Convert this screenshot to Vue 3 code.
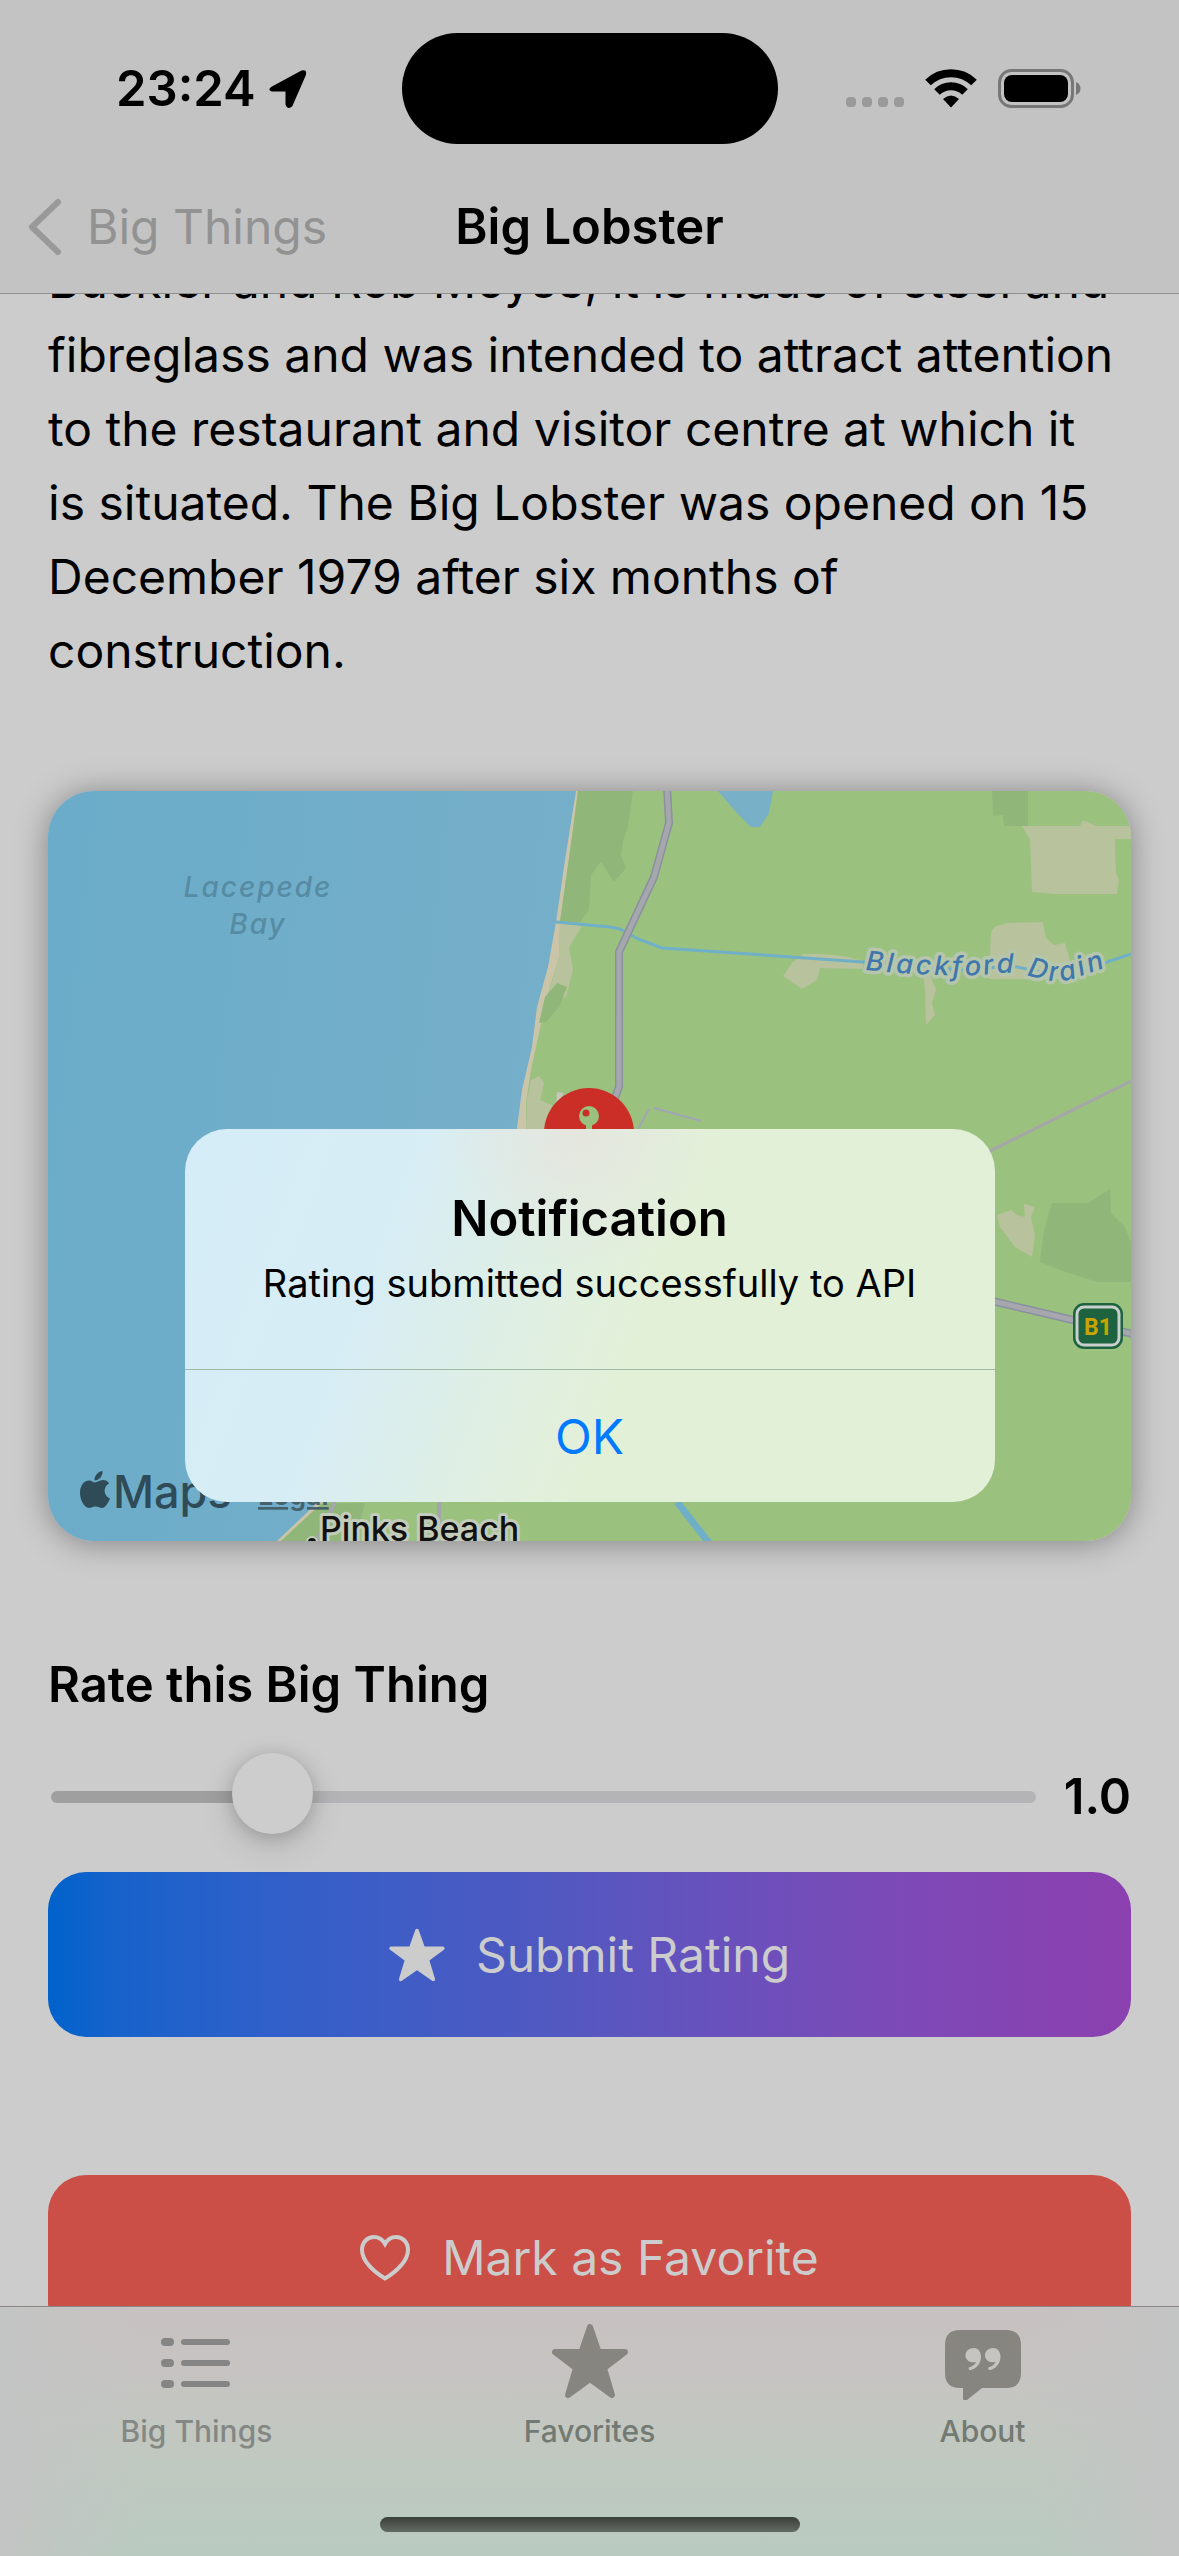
<script setup>
import { ref, computed } from 'vue'

const rating = ref(1)
const maxRating = 5
const fill = computed(() => `${(rating.value / maxRating) * 92 + 4}%`)
const alertOpen = ref(true)
</script>

<template>
  <div class="screen">
    <header class="top">
      <div class="status">
        <div class="status-side">
          <span class="time">23:24</span>
          <svg class="arrow" viewBox="0 0 40 40" aria-hidden="true">
            <path d="M3.5 19 L34 2.5 Q38 1 37 5.500 L23.500 36.500 Q20 40 18.500 35.500 L18.500 21.500 L4 21.500 Q1 21 3.500 19 Z" fill="#000" stroke="#000" stroke-width="2" stroke-linejoin="round" />
          </svg>
        </div>
        <div class="island"></div>
        <div class="status-side right">
          <svg class="dots" viewBox="0 0 58 40" aria-hidden="true">
            <rect v-for="n in 4" :key="n" :x="(n - 1) * 16" y="28" width="10" height="10" rx="4" fill="#9a9a9a" />
          </svg>
          <svg class="wifi" viewBox="0 0 52 40" aria-hidden="true">
            <g fill="none" stroke="#000" stroke-width="8">
              <path d="M3 13.500 A33 33 0 0 1 49 13.500" />
              <path d="M12 23 A20 20 0 0 1 40 23" />
            </g>
            <path d="M26 38.500 L18 30 Q26 23 34 30 Z" fill="#000" />
          </svg>
          <svg class="battery" viewBox="0 0 84 40" aria-hidden="true">
            <rect x="1.500" y="1.500" width="73" height="36" rx="12" fill="none" stroke="#777" stroke-width="3" />
            <rect x="6" y="6" width="64" height="27" rx="8" fill="#000" />
            <path d="M78 13 Q82.500 15 82.500 19.500 Q82.500 24 78 26 Z" fill="#777" />
          </svg>
        </div>
      </div>
      <nav class="navbar">
        <a class="back" href="#big-things">
          <svg viewBox="0 0 34 58" aria-hidden="true">
            <path d="M30 4 L4 29 L30 54" fill="none" stroke="#999" stroke-width="6" stroke-linecap="round" stroke-linejoin="round" />
          </svg>
          <span>Big Things</span>
        </a>
        <h1>Big Lobster</h1>
      </nav>
    </header>

    <main class="content">
      <p class="description">
        Buckler and Rob Moyse, it is made of steel and<br />
        fibreglass and was intended to attract attention<br />
        to the restaurant and visitor centre at which it<br />
        is situated. The Big Lobster was opened on 15<br />
        December 1979 after six months of<br />
        construction.
      </p>

      <div class="map">
        <svg viewBox="0 0 1083 750" preserveAspectRatio="xMidYMid slice" role="img" aria-label="Map of Lacepede Bay">
          <defs>
            <linearGradient id="sea" x1="0" y1="0" x2="1" y2="0.15">
              <stop offset="0" stop-color="#6aacc9" />
              <stop offset="1" stop-color="#77afc9" />
            </linearGradient>
            <path id="drain" d="M817 179 Q890 186 935 184 Q965 179 985 186 Q1010 194 1030 186 L1075 171" />
          </defs>
          <rect width="560" height="750" fill="url(#sea)" />
          <path fill="#cac5a8" d="M528 0 L517 69 L508 131 L500 176 L489 216 L484 256 L474 299 L469 337 L430 520 L269 712 L229 750 L1083 750 V0 Z" />
          <path fill="#9bc17f" d="M530 0 L524 46 L512 131 L511 166 L498 209 L491 242 L483 279 L478 312 L478 337 L440 520 L273 713 L233 750 H1083 V0 Z" />
          <g fill="#91b679">
            <path d="M530 0 H585 L580 36 L575 50 L573 65 L578 77 L566 91 L553 71 L543 84 L541 119 L532 131 H512 L524 46 Z" />
            <path d="M944 0 H980 V35 H956 L955 24 L945 25 Z" />
            <path d="M1004 412 H1040 L1062 398 L1063 422 L1076 435 L1083 451 V491 H1050 L1020 482 L992 471 L996 439 Z" />
            <path d="M273 713 L317 712 L307 750 H233 Z" />
          </g>
          <g fill="#b8c29d">
            <path d="M512 131 L534 135 L521 156 L525 179 L518 206 L498 212 L511 166 Z" />
            <path d="M491 285 L496 292 L492 309 L504 314 L498 338 H478 L479 309 L483 289 Z" />
            <path d="M974 35 H1032 L1035 29 L1048 35 H1083 V48 H1067 L1068 82 L1071 89 L1069 103 H1006 L984 101 L982 48 Z" />
            <path d="M755 163 H772 L796 165 L815 170 V178 L772 177 L769 189 L754 198 L735 185 L744 172 Z" />
            <path d="M943 141 L948 135 L960 132 L995 131 L998 147 L1006 154 L1017 152 L1022 169 L1013 188 H941 Z" />
            <path d="M875 182 L883 186 L888 199 L884 212 L887 224 L878 234 L877 199 Z" />
            <path d="M949 424 L963 419 L969 424 L977 426 L976 413 L987 416 L983 426 L987 444 L984 466 L967 456 L952 436 Z" />
          </g>
          <path fill="#91b679" d="M509 192 L519 196 L511 216 L498 231 L491 232 L497 206 Z" />
          <path fill="#c6c8bd" d="M509 301 L516 302 L508 314 Z" />
          <path fill="#77b0c7" d="M670 0 H725 L721 22 L712 36 H703 L688 21 Z" />
          <g fill="none" stroke="#6fb0c8" stroke-width="3">
            <path d="M508 131 L562 136 L572 138 L590 148 L614 157 L815 171 L914 179 L964 175 L1002 183 L1030 181 L1083 163" />
            <path d="M629 711 L661 752" stroke-width="7" />
          </g>
          <g fill="none" stroke-linejoin="round">
            <path d="M619 -4 L621 32 L606 86 L571 161 L571 296 L560 325" stroke="#8a90a0" stroke-width="8" />
            <path d="M619 -4 L621 32 L606 86 L571 161 L571 296 L560 325" stroke="#a5a7ad" stroke-width="5" />
            <path d="M940 509 L1025 529 L1085 543" stroke="#8a90a0" stroke-width="8" />
            <path d="M940 509 L1025 529 L1085 543" stroke="#a5a7ad" stroke-width="5" />
            <path d="M1083 290 L940 361" stroke="#a4a6a8" stroke-width="3" />
            <path d="M606 317 L653 330 M601 318 L589 340" stroke="#a0a6b4" stroke-width="2" />
            <path d="M287 711 L269 750 M391 711 V740" stroke="#a4a6ad" stroke-width="4" />
          </g>
          <circle cx="541" cy="342" r="45" fill="#cb2e27" />
          <circle cx="541" cy="325" r="10" fill="#9bc17f" />
          <rect x="538" y="333" width="6" height="22" fill="#9bc17f" />
          <circle cx="538" cy="322" r="3.500" fill="#cb2e27" />

          <g class="sea-label" text-anchor="middle">
            <text x="210" y="106">Lacepede</text>
            <text x="210" y="143">Bay</text>
          </g>
          <text class="drain-label"><textPath href="#drain">Blackford Drain</textPath></text>

          <rect x="1025" y="512" width="50" height="46" rx="11" fill="#1e633f" />
          <rect x="1029" y="516" width="42" height="38" rx="7" fill="none" stroke="#c8cfcc" stroke-width="3" />
          <text class="shield" x="1050" y="544" text-anchor="middle">B1</text>

          <path fill="#2f4b57" d="M54.500 680 C55 685 51 689.500 46.500 689.500 C46 685 50 680.500 54.500 680 Z M47 691.500 C49 691.500 51.500 689 55 689 C58 689 60 690.500 61 692.500 C54.500 696 55.500 705 62 707.500 C60 712.500 57 717 54 717 C51.500 717 50.500 715.500 47.500 715.500 C44.500 715.500 43.500 717 41 717 C36 717 32 708 32 702 C32 694 36.500 689.500 41 689.500 C43.500 689.500 45.500 691.500 47 691.500 Z" />
          <text class="maps" x="65" y="717">Maps</text>
          <text class="legal" x="210" y="714">Legal</text>
          <circle cx="264" cy="751" r="5" fill="#111" stroke="#c3ccba" stroke-width="2" />
          <text class="town" x="272" y="750">Pinks Beach</text>
        </svg>
      </div>

      <section class="rate">
        <h2><label for="rating">Rate this Big Thing</label></h2>
        <div class="slider-row">
          <input id="rating" v-model.number="rating" type="range" min="0" :max="maxRating" step="0.1" :style="{ '--fill': fill }" />
          <output for="rating">{{ rating.toFixed(1) }}</output>
        </div>
        <button class="action submit" type="button">
          <svg class="star" viewBox="0 0 76 72" aria-hidden="true">
            <path d="M38 3 L46.500 27 H73 L52 42.500 L60 69 L38 53.500 L16 69 L24 42.500 L3 27 H29.500 Z" fill="#ccc" stroke="#ccc" stroke-width="5" stroke-linejoin="round" />
          </svg>
          Submit Rating
        </button>
      </section>

      <button class="action favorite" type="button">
        <svg class="heart" viewBox="0 0 50 46" aria-hidden="true">
          <path d="M25 43.500 C14 37 2 26 2 15 C2 7 7.500 2 14 2 C19 2 22.500 4.500 25 9 C27.500 4.500 31 2 36 2 C42.500 2 48 7 48 15 C48 26 36 37 25 43.500 Z" fill="none" stroke="#ccc" stroke-width="4" />
        </svg>
        Mark as Favorite
      </button>
    </main>

    <footer class="bottom">
      <nav class="tabs">
        <a class="tab first" href="#big-things">
          <svg viewBox="0 0 76 76" aria-hidden="true">
            <g fill="#858585">
              <template v-for="y in [14, 35, 56]" :key="y">
                <rect x="2" :y="y" width="13" height="8" rx="4" />
                <rect x="22" :y="y + 1" width="49" height="6" rx="3" />
              </template>
            </g>
          </svg>
          <span>Big Things</span>
        </a>
        <a class="tab" href="#favorites">
          <svg viewBox="0 0 76 76" aria-hidden="true">
            <path d="M38 3 L46.500 28 H73 L52 44 L60 71 L38 55 L16 71 L24 44 L3 28 H29.500 Z" fill="#868580" stroke="#868580" stroke-width="6" stroke-linejoin="round" />
          </svg>
          <span>Favorites</span>
        </a>
        <a class="tab" href="#about">
          <svg viewBox="0 0 76 76" aria-hidden="true">
            <path d="M15 6 H61 Q76 6 76 21 V49 Q76 64 61 64 H37 L22 76 Q18 78 18 74 V64 H15 Q0 64 0 49 V21 Q0 6 15 6 Z" fill="#868580" />
            <g fill="#c6c4c1">
              <path d="M29 24 C33.500 24 36 28 36 33 C36 39.500 31 45 25.500 46 C23 46 23 43.500 25 43 C28 42 30 40.500 31 38 C25 39.500 20.500 36 20.500 31.500 C20.500 27 24 24 29 24 Z" />
              <path d="M48.500 24 C53 24 55.500 28 55.500 33 C55.500 39.500 50.500 45 45 46 C42.500 46 42.500 43.500 44.500 43 C47.500 42 49.500 40.500 50.500 38 C44.500 39.500 40 36 40 31.500 C40 27 43.500 24 48.500 24 Z" />
            </g>
          </svg>
          <span>About</span>
        </a>
      </nav>
      <div class="home-bar"></div>
    </footer>

    <div v-if="alertOpen" class="overlay">
      <div class="alert" role="alertdialog" aria-labelledby="alert-title" aria-describedby="alert-text">
        <div class="alert-body">
          <h2 id="alert-title">Notification</h2>
          <p id="alert-text">Rating submitted successfully to API</p>
        </div>
        <button type="button" @click="alertOpen = false">OK</button>
      </div>
    </div>
  </div>
</template>

<style>
body {
  margin: 0;
  background: #ccc;
}
</style>

<style scoped>
.screen {
  position: relative;
  display: flex;
  flex-direction: column;
  height: 100vh;
  overflow: hidden;
  background: #ccc;
  color: #000;
  font-family: Inter, "Liberation Sans", sans-serif;
  font-size: 48px;
}
h1, h2, p {
  margin: 0;
}
h1, h2 {
  font-size: 49px;
  font-weight: 600;
  line-height: 60px;
}
button {
  border: 0;
  font: inherit;
  cursor: pointer;
}
a {
  color: inherit;
  text-decoration: none;
}
svg {
  display: block;
}

.top {
  flex: none;
  background: #c3c3c3;
  border-bottom: 1px solid #8e8e8e;
}
.status {
  display: grid;
  grid-template-columns: 1fr auto 1fr;
  align-items: center;
  padding-top: 33px;
}
.status-side {
  display: flex;
  align-items: center;
  gap: 12px;
  padding-left: 116px;
}
.status-side.right {
  justify-content: flex-end;
  gap: 21px;
  padding: 0 97px 0 0;
}
.time {
  font-size: 49px;
  font-weight: 600;
  line-height: 60px;
}
.arrow {
  width: 40px;
  height: 40px;
}
.island {
  width: 376px;
  height: 111px;
  border-radius: 56px;
  background: #000;
}
.dots {
  width: 58px;
  height: 40px;
}
.wifi {
  width: 52px;
  height: 40px;
}
.battery {
  width: 84px;
  height: 40px;
}
.navbar {
  display: grid;
  grid-template-columns: 1fr auto 1fr;
  align-items: center;
  height: 133px;
  padding: 16px 28px 0;
}
.back {
  display: flex;
  align-items: center;
  gap: 25px;
  color: #929292;
}
.back svg {
  width: 34px;
  height: 58px;
}

.content {
  flex: 1;
  min-height: 0;
  overflow: hidden;
  padding: 0 48px;
}
.description {
  margin-top: -50px;
  line-height: 74px;
  white-space: nowrap;
}
.map {
  margin-top: 103px;
  border-radius: 46px;
  overflow: hidden;
  box-shadow: 0 2px 32px rgba(0, 0, 0, 0.36);
}
.map svg {
  width: 100%;
}
.map text {
  paint-order: stroke;
}
.sea-label {
  font-size: 28px;
  font-style: italic;
  font-weight: 500;
  letter-spacing: 2px;
  fill: #568ba3;
}
.drain-label {
  font-size: 27px;
  font-style: italic;
  font-weight: 500;
  letter-spacing: 3px;
  fill: #3f76ab;
  stroke: #b5c6ad;
  stroke-width: 7px;
  stroke-linejoin: round;
}
.shield {
  font-family: Roboto, "Liberation Sans", sans-serif;
  font-size: 23px;
  font-weight: 700;
  fill: #c9a400;
}
.maps {
  font-size: 45px;
  font-weight: 500;
  fill: #2f4b57;
}
.legal {
  font-size: 27px;
  font-weight: 600;
  fill: #45626c;
  text-decoration: underline;
}
.town {
  font-size: 34px;
  font-weight: 500;
  fill: #111;
  stroke: #c3ccba;
  stroke-width: 6px;
  stroke-linejoin: round;
}

.rate {
  margin-top: 114px;
}
.slider-row {
  display: flex;
  align-items: center;
  gap: 28px;
  margin-top: 52px;
  padding-left: 3px;
}
.slider-row output {
  font-size: 49px;
  font-weight: 600;
  line-height: 60px;
}
.slider-row input {
  flex: 1;
  min-width: 0;
  height: 12px;
  margin: 0;
  appearance: none;
  border-radius: 6px;
  background: linear-gradient(to right, #9f9f9f var(--fill), #b4b4b6 var(--fill));
}
.slider-row input::-webkit-slider-runnable-track {
  height: 12px;
}
.slider-row input::-webkit-slider-thumb {
  appearance: none;
  width: 81px;
  height: 81px;
  margin-top: -38px;
  border-radius: 50%;
  background: #cdcdcd;
  box-shadow: 0 12px 36px rgba(0, 0, 0, 0.12), 0 3px 18px rgba(0, 0, 0, 0.18);
}
.action {
  display: flex;
  align-items: center;
  justify-content: center;
  width: 100%;
  height: 165px;
  border-radius: 38px;
  color: #ccc;
}
.submit {
  gap: 31px;
  margin-top: 45px;
  background: linear-gradient(to right, #0062cc 0%, #1762cb 6%, #335fc9 22%, #4b5ac2 42%, #6652bd 60%, #7c4ab7 78%, #8c40af 100%);
}
.favorite {
  gap: 32px;
  margin-top: 138px;
  background: #cb4e47;
}
.star {
  width: 56px;
  height: 54px;
}
.heart {
  width: 50px;
  height: 46px;
}

.bottom {
  flex: none;
  border-top: 1px solid #8b8685;
  background:
    linear-gradient(to right, #c3c5c4 0%, transparent 12%, transparent 88%, #c3c4c4 100%),
    linear-gradient(to bottom, #c7c1c0 0%, #c6c4c2 28%, #c1c8c0 55%, #b9cbc0 100%);
}
.tabs {
  display: grid;
  grid-template-columns: repeat(3, 1fr);
}
.tab {
  display: flex;
  flex-direction: column;
  align-items: center;
  gap: 12px;
  padding-top: 17px;
  color: #737a73;
  font-size: 30px;
  font-weight: 500;
  line-height: 38px;
}
.tab.first {
  color: #858785;
}
.tab svg {
  width: 76px;
  height: 76px;
}
.home-bar {
  width: 420px;
  height: 15px;
  margin: 67px auto 24px;
  border-radius: 8px;
  background: linear-gradient(#3a3f3a, #636963);
}

.overlay {
  position: absolute;
  inset: 0;
  display: flex;
  align-items: center;
  justify-content: center;
  padding-top: 75px;
}
.alert {
  width: 810px;
  border-radius: 42px;
  overflow: hidden;
  background:
    radial-gradient(circle at 48% 0%, rgba(232, 226, 220, 0.7) 0%, transparent 25%),
    linear-gradient(110deg, #d5edf8 0%, #d7edf5 25%, #e0efe0 46%, #e3f0d8 56%);
  text-align: center;
}
.alert-body {
  padding: 60px 40px 56px;
  border-bottom: 1px solid #9fb9a4;
}
.alert-body p {
  margin-top: 4px;
  font-size: 38px;
  line-height: 60px;
}
.alert button {
  display: block;
  width: 100%;
  height: 132px;
  background: none;
  color: #007aff;
}
</style>
